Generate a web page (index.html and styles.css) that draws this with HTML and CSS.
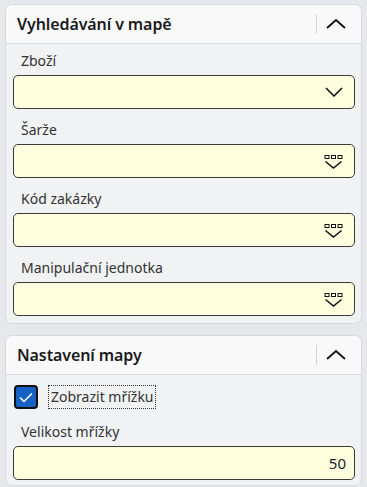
FILE: index.html
```html
<!DOCTYPE html>
<html lang="cs">
<head>
<meta charset="utf-8">
<link rel="stylesheet" href="styles.css">
</head>
<body>
<section class="panel">
  <header class="panel-header">
    <h2 class="panel-title">Vyhledávání v mapě</h2>
    <span class="sep"></span>
    <button class="collapse" type="button" aria-label="Sbalit">
      <svg width="20" height="10" viewBox="0 0 20 10"><polyline points="1,9 10,1 19,9" fill="none" stroke="#111" stroke-width="1.8"/></svg>
    </button>
  </header>
  <div class="panel-body">
    <div class="field">
      <label class="label">Zboží</label>
      <div class="input">
        <svg class="ico-down" width="18" height="10" viewBox="0 0 18 10"><polyline points="1,1 9,9 17,1" fill="none" stroke="#111" stroke-width="1.6"/></svg>
      </div>
    </div>
    <div class="field">
      <label class="label">Šarže</label>
      <div class="input">
        <svg class="ico-pick" width="19" height="14" viewBox="0 0 19 14"><rect x="1" y="0.5" width="4" height="3" fill="none" stroke="#111"/><rect x="7.5" y="0.5" width="4" height="3" fill="none" stroke="#111"/><rect x="14" y="0.5" width="4" height="3" fill="none" stroke="#111"/><polyline points="1.5,6.5 9.5,13 17.5,6.5" fill="none" stroke="#111" stroke-width="1.5"/></svg>
      </div>
    </div>
    <div class="field">
      <label class="label">Kód zakázky</label>
      <div class="input">
        <svg class="ico-pick" width="19" height="14" viewBox="0 0 19 14"><rect x="1" y="0.5" width="4" height="3" fill="none" stroke="#111"/><rect x="7.5" y="0.5" width="4" height="3" fill="none" stroke="#111"/><rect x="14" y="0.5" width="4" height="3" fill="none" stroke="#111"/><polyline points="1.5,6.5 9.5,13 17.5,6.5" fill="none" stroke="#111" stroke-width="1.5"/></svg>
      </div>
    </div>
    <div class="field">
      <label class="label">Manipulační jednotka</label>
      <div class="input">
        <svg class="ico-pick" width="19" height="14" viewBox="0 0 19 14"><rect x="1" y="0.5" width="4" height="3" fill="none" stroke="#111"/><rect x="7.5" y="0.5" width="4" height="3" fill="none" stroke="#111"/><rect x="14" y="0.5" width="4" height="3" fill="none" stroke="#111"/><polyline points="1.5,6.5 9.5,13 17.5,6.5" fill="none" stroke="#111" stroke-width="1.5"/></svg>
      </div>
    </div>
  </div>
</section>

<section class="panel">
  <header class="panel-header">
    <h2 class="panel-title">Nastavení mapy</h2>
    <span class="sep"></span>
    <button class="collapse" type="button" aria-label="Sbalit">
      <svg width="20" height="10" viewBox="0 0 20 10"><polyline points="1,9 10,1 19,9" fill="none" stroke="#111" stroke-width="1.8"/></svg>
    </button>
  </header>
  <div class="panel-body body2">
    <div class="check-row">
      <span class="checkbox">
        <svg width="14" height="11" viewBox="0 0 14 11"><polyline points="1,5.5 5,9.5 13,1.5" fill="none" stroke="#fff" stroke-width="1.5"/></svg>
      </span>
      <span class="check-label">Zobrazit mřížku</span>
    </div>
    <div class="field">
      <label class="label">Velikost mřížky</label>
      <div class="input num">50</div>
    </div>
  </div>
</section>
</body>
</html>
```

FILE: styles.css
```css
* { box-sizing: border-box; }
html, body { margin: 0; }
body {
  background: #e6e8eb;
  padding: 4px 5px 0 5px;
  font-family: "Noto Sans", "Open Sans", sans-serif;
  color: #333;
  display: flex;
  flex-direction: column;
  gap: 11px;
}
.panel {
  background: #f1f2f4;
  border: 1px solid #d7d9dc;
  border-radius: 7px;
  overflow: hidden;
}
.panel-header {
  height: 39px;
  background: #f9f9fa;
  border-bottom: 1px solid #d8dadd;
  display: flex;
  align-items: center;
  padding-left: 11px;
  padding-right: 6px;
}
.panel-title {
  margin: 0;
  font-size: 16px;
  font-weight: 600;
  color: #1b1b1b;
  flex: 1;
  letter-spacing: -0.1px;
}
.sep {
  width: 1px;
  height: 20px;
  background: #d2d3d6;
}
.collapse {
  width: 38px;
  height: 30px;
  border: 0;
  background: none;
  padding: 0;
  display: flex;
  align-items: center;
  justify-content: center;
}
.panel-body {
  padding: 7px 6px 7px 7px;
  display: flex;
  flex-direction: column;
  gap: 11px;
}
.field {
  display: flex;
  flex-direction: column;
  gap: 4px;
}
.label {
  font-size: 14px;
  line-height: 20px;
  padding-left: 8px;
  color: #333;
}
.input {
  height: 34px;
  background: #ffffe0;
  border: 1px solid #3a3a3a;
  border-radius: 5px;
  display: flex;
  align-items: center;
  justify-content: flex-end;
  padding-right: 11px;
}
.ico-pick { margin-right: 0; margin-top: 2px; }
.num {
  font-size: 15px;
  color: #222;
  padding-right: 8px;
}
.body2 {
  padding-top: 10px;
  padding-bottom: 5px;
  gap: 13px;
}
.check-row {
  display: flex;
  align-items: center;
  gap: 10px;
  padding-left: 1px;
}
.checkbox {
  width: 24px;
  height: 24px;
  border: 2px solid #111;
  border-radius: 4px;
  background: #1662c4;
  display: flex;
  align-items: center;
  justify-content: center;
}
.check-label {
  font-size: 14px;
  line-height: 20px;
  padding: 1px 1px 1px 2px;
  border: 1px dotted #333;
  color: #333;
}
```
